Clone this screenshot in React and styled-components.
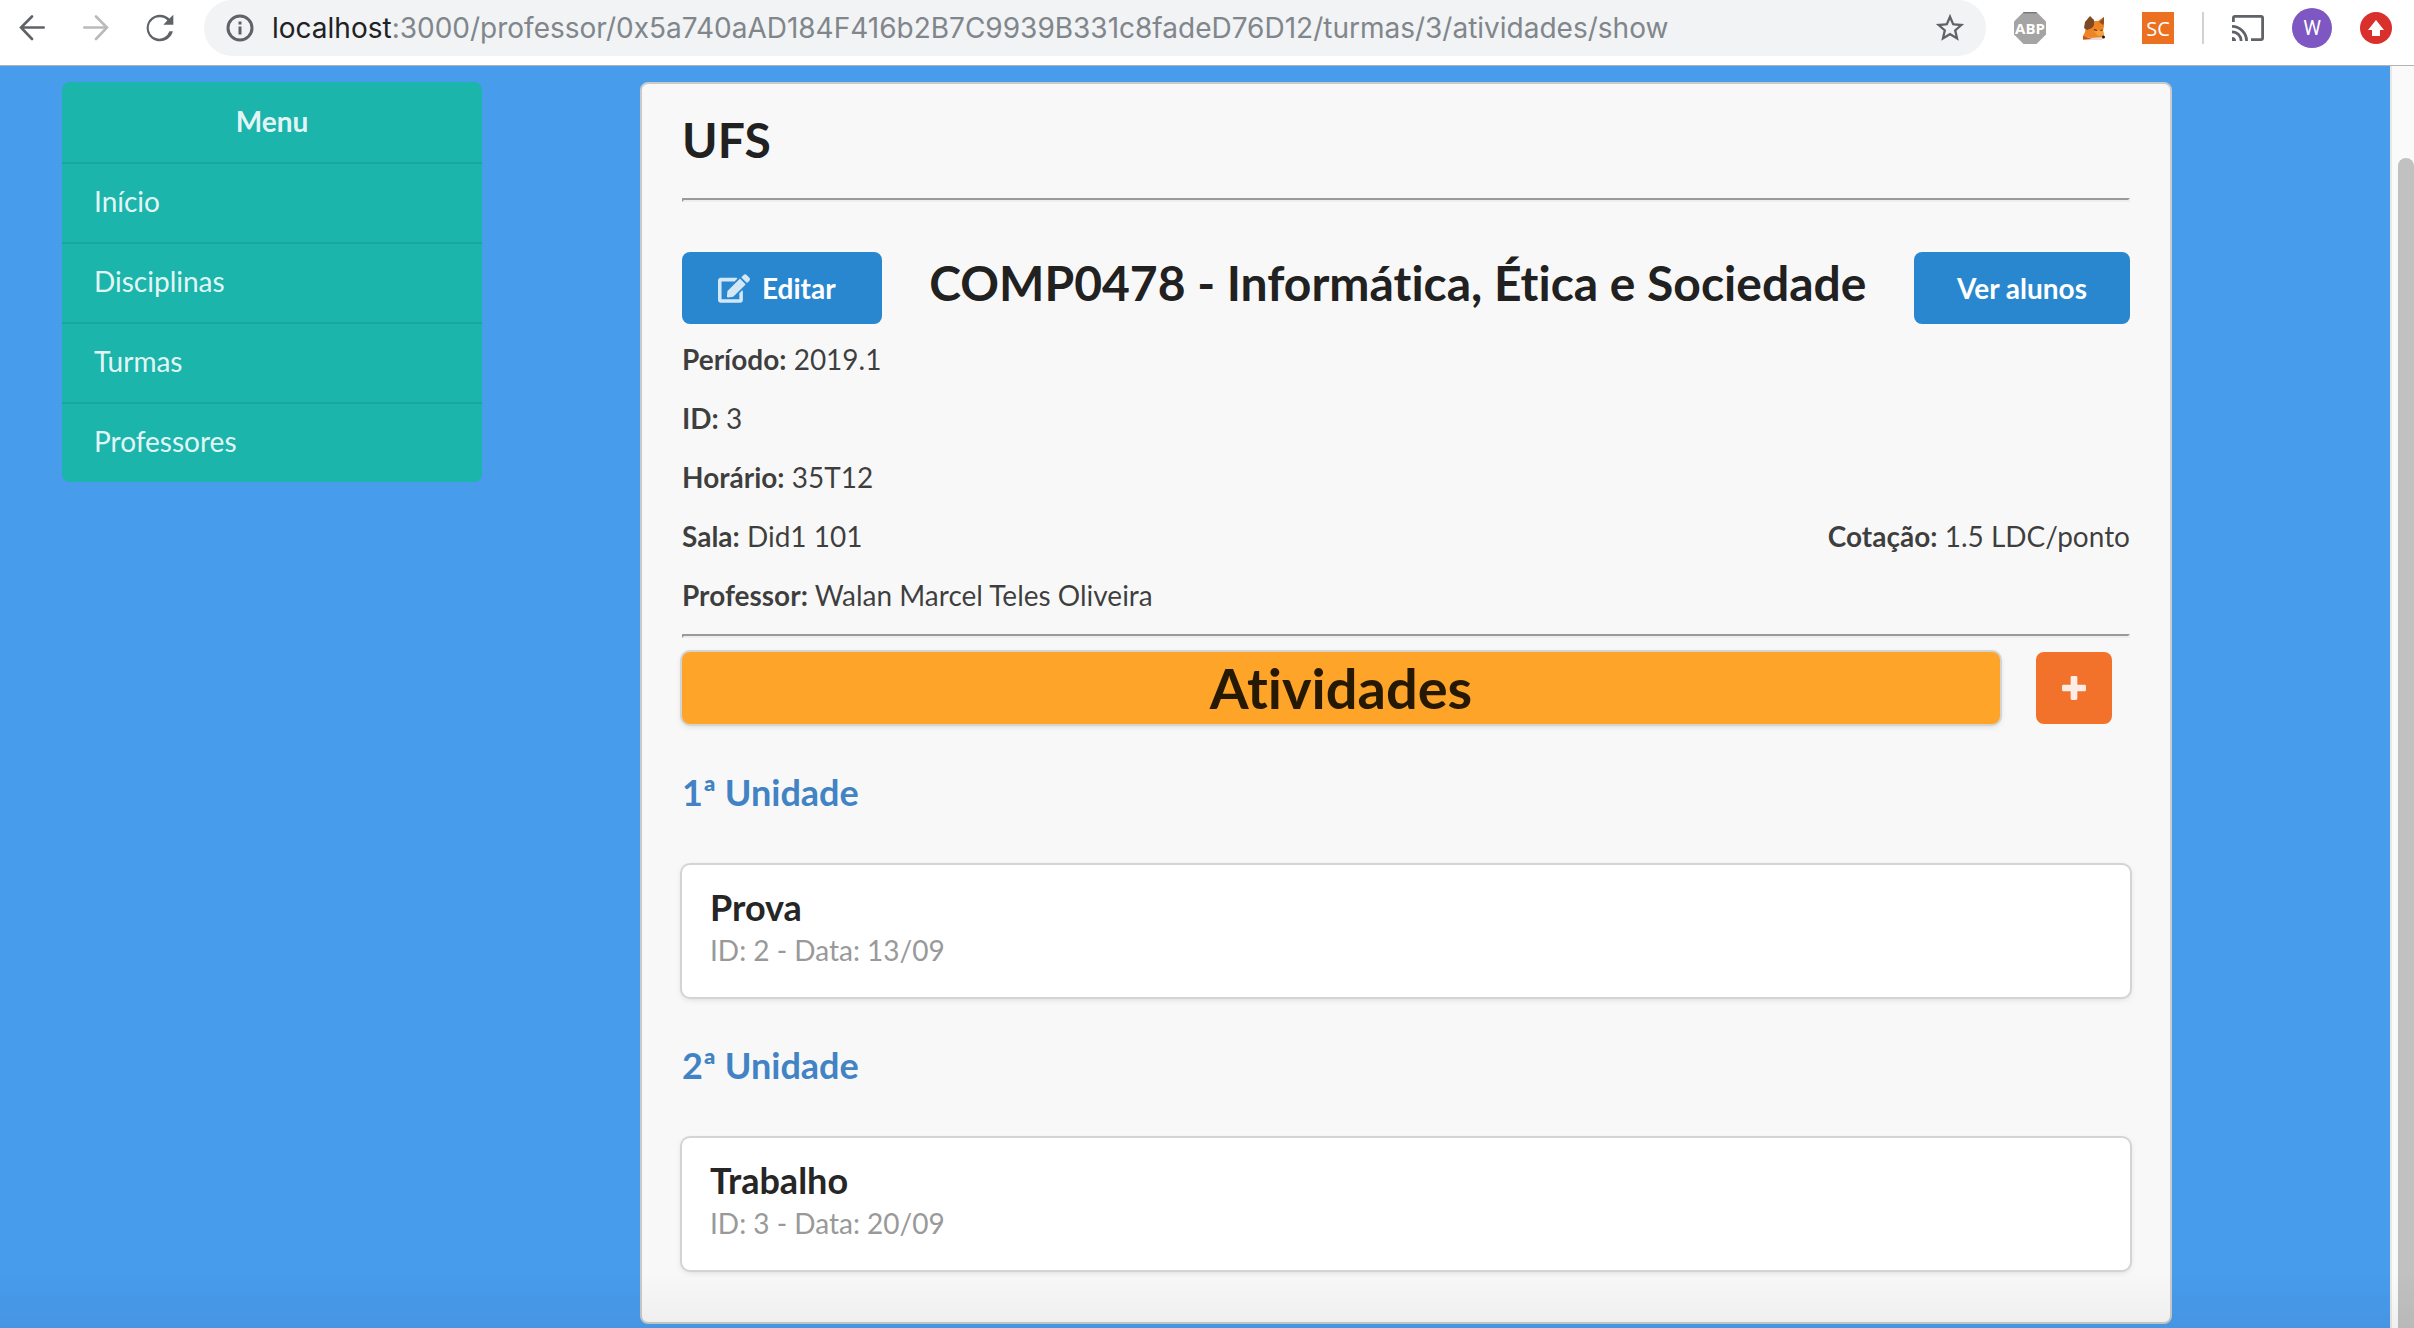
import React from "react";
import styled, { createGlobalStyle } from "styled-components";

const Global = createGlobalStyle`
  *, *::before, *::after { box-sizing: border-box; }
  body { margin: 0; background: #489cec; font-family: Lato, "Liberation Sans", sans-serif; font-size: 28px; line-height: 40px; font-variant-ligatures: none; color: rgba(0, 0, 0, 0.76); overflow: hidden; }
  h1, h2, h3, p, ul { margin: 0; padding: 0; font-size: inherit; }
  svg { flex: none; }
`;

const Window = styled.div`
  height: 100vh;
  display: flex;
  flex-direction: column;
  overflow: hidden;
`;

const Toolbar = styled.header`
  flex: none;
  display: flex;
  align-items: flex-start;
  height: 66px;
  padding: 0 22px 0 16px;
  background: #fff;
  border-bottom: 1px solid #b3b3b3;
`;

const NavButtons = styled.div`
  display: flex;
  align-items: center;
  gap: 32px;
  height: 56px;
  margin-right: 28px;
`;

const IconButton = styled.button`
  flex: none;
  display: flex;
  align-items: center;
  justify-content: center;
  width: ${(p) => p.$size || 32}px;
  height: ${(p) => p.$size || 32}px;
  padding: 0;
  border: 0;
  border-radius: ${(p) => (p.$round ? "50%" : "0")};
  background: ${(p) => p.$bg || "none"};
  color: ${(p) => p.$color || "#5f6368"};
  font: 400 20px ${(p) => p.$face || "Roboto"}, sans-serif;
`;

const AddressBar = styled.div`
  flex: 1;
  min-width: 0;
  display: flex;
  align-items: center;
  height: 56px;
  padding: 0 20px 0 22px;
  border-radius: 28px;
  background: #f1f3f4;
`;

const Url = styled.div`
  flex: 1;
  min-width: 0;
  margin-left: 18px;
  overflow: hidden;
  white-space: nowrap;
  font-family: Inter, Roboto, "Liberation Sans", sans-serif;
  color: #80868b;
`;

const Host = styled.span`
  color: #202124;
`;

const Extensions = styled.div`
  flex: none;
  display: flex;
  align-items: center;
  gap: 28px;
  height: 56px;
  margin-left: 28px;
`;

const ExtensionGroup = styled.div`
  display: flex;
  gap: 32px;
`;

const Separator = styled.span`
  width: 2px;
  height: 32px;
  background: #d0d2d4;
`;

const Viewport = styled.div`
  flex: 1;
  min-height: 0;
  display: flex;
`;

const Page = styled.div`
  flex: 1;
  min-width: 0;
  display: grid;
  grid-template-columns: 420px minmax(0, 1fr);
  gap: 158px;
  align-items: start;
  padding: 16px 218px 0 62px;
`;

const ScrollTrack = styled.div`
  flex: none;
  width: 24px;
  padding: 92px 0 0 6px;
  background: #fafafa;
  border-left: 2px solid #e8e8e8;
`;

const ScrollThumb = styled.div`
  height: 100%;
  background: #c1c1c1;
  border-radius: 8px 8px 0 0;
`;

const BottomShade = styled.div`
  position: fixed;
  inset: auto 0 0 0;
  height: 56px;
  background: linear-gradient(rgba(0, 0, 0, 0), rgba(0, 0, 0, 0.04));
  pointer-events: none;
`;

const SideMenu = styled.nav`
  overflow: hidden;
  border-radius: 8px;
  background: #1bb5ac;
  color: rgba(255, 255, 255, 0.9);
`;

const MenuTitle = styled.h2`
  height: 80px;
  padding: 19px 32px;
  text-align: center;
  font-weight: 700;
`;

const MenuLink = styled.a`
  display: block;
  height: 80px;
  padding: 17px 32px;
  border-top: 2px solid rgba(0, 0, 0, 0.08);
  color: inherit;
  text-decoration: none;
`;

const Panel = styled.main`
  padding: 25px 40px 52px;
  border: 2px solid #c9caca;
  border-radius: 8px;
  background: #f8f8f8;
`;

const Heading = styled.h1`
  line-height: 62px;
  font-size: 48px;
  font-weight: 700;
  color: #212121;
`;

const Rule = styled.hr`
  height: 4px;
  margin: ${(p) => p.$margin};
  border: 2px solid #9a9a9a;
  border-right-color: #eee;
  border-bottom-color: #eee;
`;

const TitleRow = styled.div`
  display: flex;
  justify-content: space-between;
  align-items: flex-start;
`;

const Button = styled.button`
  flex: none;
  display: flex;
  align-items: center;
  justify-content: center;
  gap: 12px;
  height: 72px;
  padding: ${(p) => p.$pad};
  border: 0;
  border-radius: 8px;
  background: ${(p) => p.$bg || "#2987cf"};
  color: #fff;
  font: 700 28px/40px Lato, sans-serif;
`;

const Details = styled.div`
  display: flex;
  flex-direction: column;
  gap: 19px;
  margin-top: 15px;
`;

const DetailRow = styled.div`
  display: flex;
  justify-content: space-between;
`;

const ActivitiesBar = styled.div`
  display: flex;
  gap: 36px;
  padding-right: 18px;
`;

const cardEdge = "0 2px 6px 0 #d4d4d5, 0 0 0 2px #d4d4d5";

const Banner = styled.h2`
  flex: 1;
  border-radius: 8px;
  background: #fea429;
  box-shadow: ${cardEdge};
  text-align: center;
  font-size: 56px;
  line-height: 72px;
  font-weight: 700;
  color: #261904;
`;

const UnitTitle = styled.h3`
  margin: 45px 0 50px;
  font-size: 36px;
  line-height: 46px;
  font-weight: 700;
`;

const UnitLink = styled.a`
  color: #4183c4;
  text-decoration: none;
`;

const Card = styled.article`
  padding: 19px 28px 27px;
  border-radius: 8px;
  background: #fff;
  box-shadow: ${cardEdge};
`;

const CardTitle = styled.h3`
  font-size: 36px;
  line-height: 46px;
  font-weight: 700;
  color: #262626;
`;

const CardMeta = styled.p`
  color: #999;
`;

const BackIcon = () => (
  <svg width="26" height="26" viewBox="0 0 26 26" fill="none" stroke="currentColor" strokeWidth="2.6" strokeLinecap="round">
    <path d="M24.700 12.500H2M13 1.500L2 12.500L13 24" />
  </svg>
);

const ForwardIcon = () => (
  <svg width="26" height="26" viewBox="0 0 26 26" fill="none" stroke="currentColor" strokeWidth="2.6" strokeLinecap="round">
    <path d="M1.300 12.500H24M13 1.500L24 12.500L13 24" />
  </svg>
);

const ReloadIcon = () => (
  <svg width="40" height="40" viewBox="0 0 24 24" fill="currentColor">
    <path d="M17.65 6.35A7.96 7.96 0 0 0 12 4a8 8 0 1 0 7.73 10h-2.080A6.400 6.400 0 1 1 12 5.600c1.660 0 3.240.69 4.400 1.900L14 10h6V4z" />
  </svg>
);

const InfoIcon = () => (
  <svg width="28" height="28" viewBox="0 0 28 28" fill="none" stroke="#5f6368" strokeWidth="3">
    <circle cx="14" cy="14" r="12" />
    <path d="M14 12.5V20.5M14 7.5V10.5" />
  </svg>
);

const StarIcon = () => (
  <svg width="34" height="34" viewBox="0 0 24 24" fill="currentColor">
    <path d="M22 9.24l-7.19-.62L12 2 9.19 8.63 2 9.24l5.46 4.73L5.82 21 12 17.27 18.18 21l-1.63-7.03L22 9.24zM12 15.4l-3.76 2.27 1-4.28-3.32-2.88 4.38-.38L12 6.1l1.71 4.04 4.38.38-3.32 2.88 1 4.28L12 15.4z" />
  </svg>
);

const AdBlockIcon = () => (
  <svg width="32" height="32" viewBox="0 0 32 32">
    <path d="M9.5 0h13L32 9.5v13L22.5 32h-13L0 22.5v-13z" fill="#a4a4a4" />
    <path d="M9.5.7h13" stroke="#777" strokeWidth="1.4" />
    <text x="16" y="21.5" textAnchor="middle" fontFamily="Open Sans, sans-serif" fontWeight="700" fontSize="15" fill="#fff">ABP</text>
  </svg>
);

const FoxIcon = () => (
  <svg width="22" height="25" viewBox="0 0 22 25">
    <path d="M10 5l5 0 6-4v9l-1 5 1 4-1 4-9 1H0v-4l2-4 1-6z" fill="#ee8425" />
    <path d="M11 15l9-1 1 5-6 1z" fill="#f7a13c" />
    <path d="M7 0l4 4v5l-2 3-5 2-3-2 1-6z" fill="#7b4a24" />
    <path d="M21 1l-5 5 4 3 1-2z" fill="#8f5226" />
    <path d="M0 23c4-3 5-1 8-1s8-1 13-1l-2 3H8z" fill="#e8ddd6" />
    <path d="M0 20l9 3H0z" fill="#c4541d" />
    <path d="M11 13.500l3 1M17.500 14.500l2-.5" stroke="#4c2b17" strokeWidth="1.200" />
    <circle cx="20.500" cy="21" r="1.500" fill="#1c1c1c" />
  </svg>
);

const CastIcon = () => (
  <svg width="32" height="27" viewBox="0 0 32 27" fill="none" stroke="#5f6368" strokeWidth="2.800">
    <path d="M1.400 7V3Q1.400 1.400 3 1.400H29Q30.600 1.400 30.600 3V23Q30.600 24.600 29 24.600H19M0 11.400A14.600 14.600 0 0 1 14.600 26M0 16.800A9.200 9.200 0 0 1 9.200 26" />
    <path d="M0 22a4 4 0 0 1 4 4H0z" fill="#5f6368" stroke="none" />
  </svg>
);

const UpArrowIcon = () => (
  <svg width="16" height="16" viewBox="0 0 16 16" fill="#fff">
    <path d="M8 0l8 10h-4v6H4v-6H0z" />
  </svg>
);

const EditIcon = () => (
  <svg width="32" height="29" viewBox="0 0 576 512" fill="#fff" opacity="0.8">
    <path d="M402.600 83.200l90.200 90.200c3.800 3.800 3.800 10 0 13.800L274.400 405.600l-92.800 10.300c-12.400 1.400-22.900-9.100-21.500-21.500l10.300-92.800L388.800 83.200c3.800-3.800 10-3.800 13.800 0zm162-22.900l-48.800-48.800c-15.200-15.200-39.900-15.200-55.200 0l-35.400 35.400c-3.800 3.800-3.800 10 0 13.800l90.200 90.200c3.800 3.800 10 3.800 13.800 0l35.400-35.400c15.200-15.300 15.200-40 0-55.200zM384 346.200V448H64V128h229.800c3.200 0 6.200-1.300 8.500-3.500l40-40c7.600-7.600 2.200-20.500-8.500-20.500H48C21.500 64 0 85.500 0 112v352c0 26.500 21.500 48 48 48h352c26.500 0 48-21.500 48-48V306.200c0-10.700-12.900-16-20.500-8.500l-40 40c-2.200 2.300-3.500 5.300-3.500 8.500z" />
  </svg>
);

const PlusIcon = () => (
  <svg width="24" height="24" viewBox="0 0 25 25" fill="#fff" opacity="0.88">
    <path d="M10.500 0h4Q16 0 16 1.500V9h7.500Q25 9 25 10.500v4Q25 16 23.500 16H16v7.500Q16 25 14.500 25h-4Q9 25 9 23.500V16H1.500Q0 16 0 14.500v-4Q0 9 1.500 9H9V1.500Q9 0 10.500 0z" />
  </svg>
);

const menu = ["Início", "Disciplinas", "Turmas", "Professores"];

const units = [
  { name: "1ª Unidade", title: "Prova", meta: "ID: 2 - Data: 13/09" },
  { name: "2ª Unidade", title: "Trabalho", meta: "ID: 3 - Data: 20/09" },
];

export default function App() {
  return (
    <Window>
      <Global />
      <Toolbar>
        <NavButtons>
          <IconButton aria-label="Voltar"><BackIcon /></IconButton>
          <IconButton aria-label="Avançar" $color="#bababa"><ForwardIcon /></IconButton>
          <IconButton aria-label="Recarregar"><ReloadIcon /></IconButton>
        </NavButtons>
        <AddressBar>
          <InfoIcon />
          <Url role="textbox" aria-label="Endereço">
            <Host>localhost</Host>:3000/professor/0x5a740aAD184F416b2B7C9939B331c8fadeD76D12/turmas/3/atividades/show
          </Url>
          <IconButton aria-label="Favoritar"><StarIcon /></IconButton>
        </AddressBar>
        <Extensions>
          <ExtensionGroup>
            <IconButton aria-label="Bloqueador de anúncios"><AdBlockIcon /></IconButton>
            <IconButton aria-label="Carteira"><FoxIcon /></IconButton>
            <IconButton $bg="#eb7121" $color="#fff" $face="Open Sans">SC</IconButton>
          </ExtensionGroup>
          <Separator />
          <IconButton aria-label="Transmitir"><CastIcon /></IconButton>
          <IconButton $size={40} $round $bg="#7e57c2" $color="#fff">W</IconButton>
          <IconButton aria-label="Atualizar navegador" $round $bg="#d9302b"><UpArrowIcon /></IconButton>
        </Extensions>
      </Toolbar>
      <Viewport>
        <Page>
          <SideMenu>
            <MenuTitle>Menu</MenuTitle>
            {menu.map((label) => (
              <MenuLink href="#" key={label}>{label}</MenuLink>
            ))}
          </SideMenu>
          <Panel>
            <Heading>UFS</Heading>
            <Rule $margin="27px 0 50px" />
            <TitleRow>
              <Button $pad="0 46px 0 36px"><EditIcon />Editar</Button>
              <Heading as="h2">COMP0478 - Informática, Ética e Sociedade</Heading>
              <Button $pad="0 43px">Ver alunos</Button>
            </TitleRow>
            <Details>
              <p><b>Período:</b> 2019.1</p>
              <p><b>ID:</b> 3</p>
              <p><b>Horário:</b> 35T12</p>
              <DetailRow>
                <p><b>Sala:</b> Did1 101</p>
                <p><b>Cotação:</b> 1.5 LDC/ponto</p>
              </DetailRow>
              <p><b>Professor:</b> Walan Marcel Teles Oliveira</p>
            </Details>
            <Rule $margin="19px 0 14px" />
            <ActivitiesBar>
              <Banner>Atividades</Banner>
              <Button $pad="0 26px" $bg="#f2712b" aria-label="Adicionar atividade"><PlusIcon /></Button>
            </ActivitiesBar>
            {units.map((unit) => (
              <section key={unit.name}>
                <UnitTitle><UnitLink href="#">{unit.name}</UnitLink></UnitTitle>
                <Card>
                  <CardTitle>{unit.title}</CardTitle>
                  <CardMeta>{unit.meta}</CardMeta>
                </Card>
              </section>
            ))}
          </Panel>
        </Page>
        <ScrollTrack><ScrollThumb /></ScrollTrack>
      </Viewport>
      <BottomShade />
    </Window>
  );
}
